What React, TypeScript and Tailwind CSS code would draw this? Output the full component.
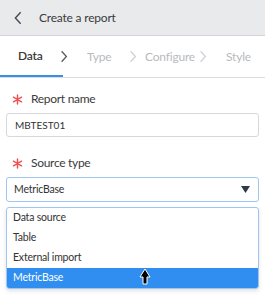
import React from 'react';

const Chevron: React.FC<{ className?: string; dir?: 'left' | 'right' }> = ({ className, dir = 'right' }) => (
  <svg className={className} viewBox="0 0 10 16" fill="none" stroke="currentColor" strokeWidth={1.6}>
    {dir === 'right' ? <path d="M2 1.5l6 6.5-6 6.5" /> : <path d="M8 1.5L2 8l6 6.5" />}
  </svg>
);

const Star: React.FC = () => (
  <svg className="w-[11px] h-[11px] text-[#f0504f]" viewBox="0 0 12 12" stroke="currentColor" strokeWidth={1.6} strokeLinecap="round">
    <path d="M6 1v10M1.6 3.5l8.8 5M1.6 8.5l8.8-5" />
  </svg>
);

const Cursor: React.FC = () => (
  <svg className="absolute left-[139px] top-[268px] w-[12px] h-[17px]" viewBox="0 0 12 17">
    <path d="M6 1L1 9h3v7h4V9h3z" fill="#000" stroke="#fff" strokeWidth={1} strokeLinejoin="round" />
  </svg>
);

export default function App() {
  return (
    <div className="relative w-[265px] h-[296px] bg-white text-[#3b3b3b]" style={{ fontFamily: 'Lato, "Open Sans", sans-serif' }}>
      {/* Header */}
      <header className="h-[36px] bg-[#e9eaec] border-b border-[#d3d5d8] flex items-center">
        <Chevron dir="left" className="w-[10px] h-[14px] ml-[13px] text-[#3f4b58]" />
        <span className="ml-[16px] text-[12px] tracking-[-0.2px]">Create a report</span>
      </header>

      {/* Steps */}
      <nav className="h-[42px] border-b border-[#dcdde0] flex items-stretch text-[12px] tracking-[-0.2px]">
        <div className="w-[63px] border-b-2 border-[#3a8ee8] flex items-center pl-[18px] font-semibold text-[#3b3b3b]">
          Data
        </div>
        <div className="flex items-center">
          <Chevron className="w-[8px] h-[13px] -ml-[3px] text-[#555a60]" />
          <span className="ml-[19px] w-[42px] text-[#b7babe]">Type</span>
          <Chevron className="w-[8px] h-[13px] text-[#cfd1d4]" />
          <span className="ml-[8px] w-[54px] text-[#b7babe]">Configure</span>
          <Chevron className="w-[8px] h-[13px] text-[#cfd1d4]" />
          <span className="ml-[19px] text-[#b7babe]">Style</span>
        </div>
      </nav>

      {/* Form */}
      <div className="px-[6px]">
        <label className="flex items-center h-[18px] mt-[12px] pl-[6px]">
          <Star />
          <span className="ml-[8px] text-[12px] tracking-[-0.3px]">Report name</span>
        </label>
        <div className="mt-[5px] h-[24px] border border-[#d6d8db] rounded-[3px] flex items-center pl-[8px] text-[10px] text-[#333]">
          MBTEST01
        </div>

        <label className="flex items-center h-[18px] mt-[17px] pl-[6px]">
          <Star />
          <span className="ml-[8px] text-[12px] tracking-[-0.3px]">Source type</span>
        </label>
        <div className="mt-[5px] h-[25px] border border-[#9fc6f3] rounded-[3px] flex items-center justify-between pl-[7px] pr-[8px] text-[10.5px] tracking-[-0.2px] text-[#333]">
          <span>MetricBase</span>
          <svg className="w-[9px] h-[7px] text-[#2f3a45]" viewBox="0 0 9 7" fill="currentColor">
            <path d="M0 0h9L4.5 7z" />
          </svg>
        </div>

        <ul className="mt-[5px] border border-[#9fc6f3] rounded-[3px] overflow-hidden shadow-[0_2px_4px_rgba(0,0,0,0.12)] text-[10.5px] tracking-[-0.2px] text-[#333]">
          <li className="h-[20px] flex items-center pl-[6px]">Data source</li>
          <li className="h-[20px] flex items-center pl-[6px]">Table</li>
          <li className="h-[20px] flex items-center pl-[6px]">External import</li>
          <li className="h-[20px] flex items-center pl-[6px] bg-[#2f8ef0] text-white">MetricBase</li>
        </ul>
      </div>

      <Cursor />
    </div>
  );
}
